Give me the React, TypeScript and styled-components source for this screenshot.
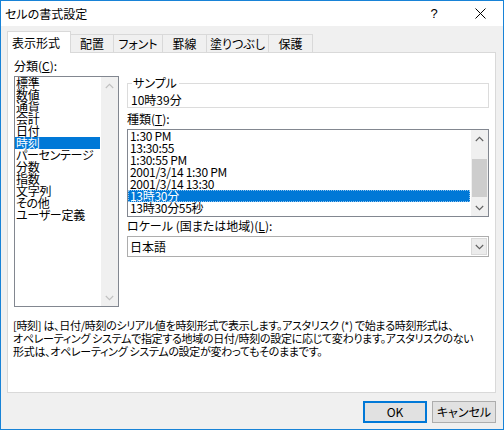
import styled, { createGlobalStyle } from "styled-components";

const GlobalStyle = createGlobalStyle`
  html, body {
    margin: 0;
    padding: 0;
    background: #ffffff;
  }
  body {
    font-family: "Noto Sans CJK JP", "Liberation Sans", sans-serif;
    font-size: 12px;
    font-feature-settings: "palt";
    color: #000;
  }
`;

const Window = styled.div`
  width: 504px;
  height: 430px;
  box-sizing: border-box;
  border: 1px solid #1883d7;
  background: #f0f0f0;
  display: flex;
  flex-direction: column;
`;

const TitleBar = styled.div`
  height: 25px;
  background: #ffffff;
  display: flex;
  align-items: center;
`;

const Title = styled.div`
  flex: 1;
  padding-left: 4px;
  line-height: 12px;
  font-size: 12px;
`;

const TitleButton = styled.div`
  width: 46px;
  height: 25px;
  display: flex;
  align-items: center;
  justify-content: center;
  font-family: "Liberation Sans", sans-serif;
  font-size: 13px;
`;

const Body = styled.div`
  flex: 1;
  display: flex;
  flex-direction: column;
  padding: 5px 7px 0 6px;
`;

const TabRow = styled.div`
  height: 21px;
  display: flex;
  align-items: flex-end;
  position: relative;
  z-index: 1;
`;

const Tab = styled.div<{ $w: number; $active?: boolean }>`
  box-sizing: border-box;
  width: ${(p) => p.$w}px;
  height: ${(p) => (p.$active ? 22 : 18)}px;
  margin-bottom: ${(p) => (p.$active ? -1 : 0)}px;
  margin-right: -1px;
  border: 1px solid #d9d9d9;
  border-bottom: none;
  background: ${(p) => (p.$active ? "#ffffff" : "#f0f0f0")};
  display: flex;
  align-items: center;
  justify-content: ${(p) => (p.$active ? "flex-start" : "center")};
  padding-left: ${(p) => (p.$active ? 4 : 0)}px;
  padding-top: ${(p) => (p.$active ? 0 : 1)}px;
  line-height: 12px;
  white-space: nowrap;
`;

const Panel = styled.div`
  box-sizing: border-box;
  height: 341px;
  border: 1px solid #d9d9d9;
  background: #ffffff;
  padding: 7px 6px 0 6px;
  display: flex;
  flex-direction: column;
`;

const TopRow = styled.div`
  display: flex;
  gap: 8px;
`;

const LeftCol = styled.div`
  width: 105px;
  display: flex;
  flex-direction: column;
`;

const RightCol = styled.div`
  flex: 1;
  display: flex;
  flex-direction: column;
  padding-top: 17px;
`;

const Label = styled.div<{ $mt?: number }>`
  line-height: 12px;
  height: 12px;
  margin-top: ${(p) => p.$mt ?? 0}px;
  margin-bottom: 4px;
  white-space: nowrap;
`;

const Key = styled.span`
  text-decoration: underline;
  text-underline-offset: 1px;
`;

const ListBox = styled.div<{ $h: number }>`
  box-sizing: border-box;
  height: ${(p) => p.$h}px;
  border: 1px solid #828790;
  background: #ffffff;
  display: flex;
  overflow: hidden;
`;

const Items = styled.div<{ $pl: number }>`
  flex: 1;
  display: flex;
  flex-direction: column;
  padding-right: 1px;
  overflow: hidden;
  & > div {
    padding-left: ${(p) => p.$pl}px;
  }
`;

const Item = styled.div<{ $sel?: boolean; $focus?: boolean }>`
  box-sizing: border-box;
  height: 12px;
  line-height: 12px;
  white-space: nowrap;
  letter-spacing: -0.3px;
  background: ${(p) => (p.$sel ? "#0078d7" : "transparent")};
  color: ${(p) => (p.$sel ? "#ffffff" : "#000000")};
  outline: ${(p) => (p.$focus ? "1px dotted #8fc3ee" : "none")};
  outline-offset: -1px;
`;

const ScrollBar = styled.div`
  width: 17px;
  background: #f0f0f0;
  display: flex;
  flex-direction: column;
`;

const Arrow = styled.div`
  height: 17px;
  display: flex;
  align-items: center;
  justify-content: center;
`;

const Track = styled.div`
  flex: 1;
  display: flex;
  flex-direction: column;
`;

const Thumb = styled.div<{ $top: number; $h: number }>`
  margin: ${(p) => p.$top}px 1px 0 1px;
  height: ${(p) => p.$h}px;
  background: #cdcdcd;
`;

const Sample = styled.fieldset`
  margin: 0;
  padding: 5px 3px 1px 3px;
  border: 1px solid #dcdcdc;
  min-width: 0;
`;

const Legend = styled.legend`
  padding: 0 2px 0 1px;
  margin-left: 1px;
  line-height: 12px;
  color: #000;
`;

const SampleText = styled.div`
  line-height: 12px;
  height: 12px;
`;

const Select = styled.div`
  box-sizing: border-box;
  height: 21px;
  border: 1px solid #adadad;
  background: #ffffff;
  display: flex;
  align-items: stretch;
`;

const SelectValue = styled.div`
  flex: 1;
  display: flex;
  align-items: center;
  padding-left: 2px;
  line-height: 12px;
`;

const SelectButton = styled.div`
  width: 16px;
  margin: 1px;
  background: #ececec;
  border: 1px solid #dadada;
  box-sizing: border-box;
  display: flex;
  align-items: center;
  justify-content: center;
`;

const Description = styled.div`
  margin-top: 12px;
  margin-left: -1px;
  font-size: 11px;
  line-height: 13px;
  white-space: nowrap;
  letter-spacing: -0.3px;
`;

const Footer = styled.div`
  display: flex;
  justify-content: flex-end;
  gap: 5px;
  padding-top: 8px;
`;

const Button = styled.div<{ $default?: boolean }>`
  box-sizing: border-box;
  width: 64px;
  height: 22px;
  background: #e1e1e1;
  border: ${(p) => (p.$default ? "2px solid #0078d7" : "1px solid #adadad")};
  display: flex;
  align-items: center;
  justify-content: center;
  line-height: 12px;
`;

const Chevron = ({ up, color }: { up?: boolean; color: string }) => (
  <svg width="9" height="6" viewBox="0 0 9 6">
    <polyline
      points={up ? "0.8,5 4.5,1.3 8.2,5" : "0.8,1 4.5,4.7 8.2,1"}
      fill="none"
      stroke={color}
      strokeWidth="1.1"
    />
  </svg>
);

const categories = [
  "標準",
  "数値",
  "通貨",
  "会計",
  "日付",
  "時刻",
  "パーセンテージ",
  "分数",
  "指数",
  "文字列",
  "その他",
  "ユーザー定義",
];

const types = [
  "1:30 PM",
  "13:30:55",
  "1:30:55 PM",
  "2001/3/14 1:30 PM",
  "2001/3/14 13:30",
  "13時30分",
  "13時30分55秒",
];

const tabs = [
  { label: "表示形式", w: 64 },
  { label: "配置", w: 44 },
  { label: "フォント", w: 50 },
  { label: "罫線", w: 45 },
  { label: "塗りつぶし", w: 63 },
  { label: "保護", w: 45 },
];

export default function App() {
  return (
    <>
      <GlobalStyle />
      <Window>
        <TitleBar>
          <Title>セルの書式設定</Title>
          <TitleButton>?</TitleButton>
          <TitleButton>
            <svg width="11" height="11" viewBox="0 0 11 11">
              <path d="M0.5 0.5 L10.5 10.5 M10.5 0.5 L0.5 10.5" stroke="#000" strokeWidth="1" />
            </svg>
          </TitleButton>
        </TitleBar>
        <Body>
          <TabRow>
            {tabs.map((t, i) => (
              <Tab key={t.label} $w={t.w} $active={i === 0}>
                {t.label}
              </Tab>
            ))}
          </TabRow>
          <Panel>
            <TopRow>
              <LeftCol>
                <Label>
                  分類(<Key>C</Key>):
                </Label>
                <ListBox $h={231}>
                  <Items $pl={1}>
                    {categories.map((c) => (
                      <Item key={c} $sel={c === "時刻"}>
                        {c}
                      </Item>
                    ))}
                  </Items>
                  <ScrollBar>
                    <Arrow>
                      <Chevron up color="#c0c0c0" />
                    </Arrow>
                    <Track />
                    <Arrow>
                      <Chevron color="#c0c0c0" />
                    </Arrow>
                  </ScrollBar>
                </ListBox>
              </LeftCol>
              <RightCol>
                <Sample>
                  <Legend>サンプル</Legend>
                  <SampleText>10時39分</SampleText>
                </Sample>
                <Label $mt={5}>
                  種類(<Key>T</Key>):
                </Label>
                <ListBox $h={88}>
                  <Items $pl={2}>
                    {types.map((t) => (
                      <Item key={t} $sel={t === "13時30分"} $focus={t === "13時30分"}>
                        {t}
                      </Item>
                    ))}
                  </Items>
                  <ScrollBar>
                    <Arrow>
                      <Chevron up color="#606060" />
                    </Arrow>
                    <Track>
                      <Thumb $top={12} $h={38} />
                    </Track>
                    <Arrow>
                      <Chevron color="#606060" />
                    </Arrow>
                  </ScrollBar>
                </ListBox>
                <Label $mt={3}>
                  ロケール (国または地域)(<Key>L</Key>):
                </Label>
                <Select>
                  <SelectValue>日本語</SelectValue>
                  <SelectButton>
                    <Chevron color="#606060" />
                  </SelectButton>
                </Select>
              </RightCol>
            </TopRow>
            <Description>
              [時刻] は、日付/時刻のシリアル値を時刻形式で表示します。アスタリスク (*) で始まる時刻形式は、
              <br />
              オペレーティング システムで指定する地域の日付/時刻の設定に応じて変わります。アスタリスクのない
              <br />
              形式は、オペレーティング システムの設定が変わってもそのままです。
            </Description>
          </Panel>
          <Footer>
            <Button $default>OK</Button>
            <Button>キャンセル</Button>
          </Footer>
        </Body>
      </Window>
    </>
  );
}
